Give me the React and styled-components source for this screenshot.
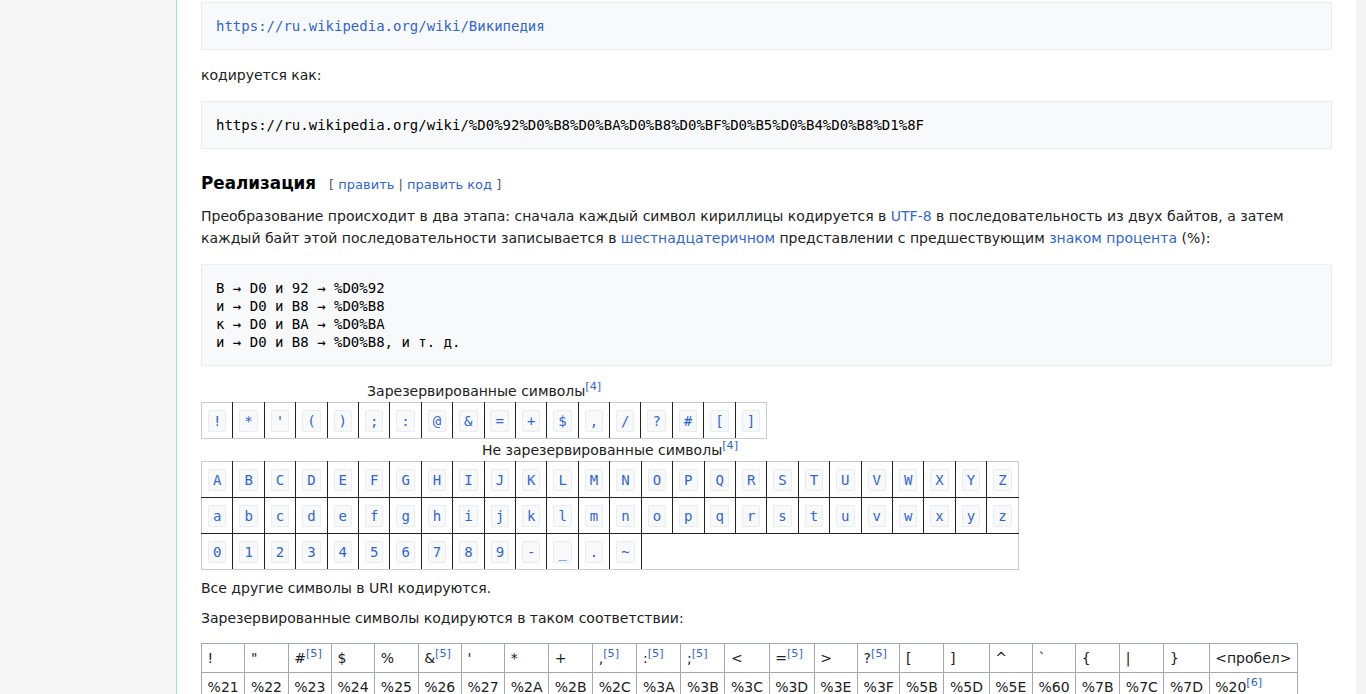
import styled, { createGlobalStyle } from 'styled-components';

const GlobalStyle = createGlobalStyle`
  body {
    margin: 0;
    background: #ffffff;
    color: #202122;
    font-family: "DejaVu Sans", sans-serif;
    font-size: 14px;
  }
`;

const reserved = ['!', '*', "'", '(', ')', ';', ':', '@', '&', '=', '+', '$', ',', '/', '?', '#', '[', ']'];
const upper = 'ABCDEFGHIJKLMNOPQRSTUVWXYZ'.split('');
const lower = 'abcdefghijklmnopqrstuvwxyz'.split('');
const digits = ['0', '1', '2', '3', '4', '5', '6', '7', '8', '9', '-', '_', '.', '~'];

const encoding = [
  ['!', '%21'], ['"', '%22'], ['#', '%23', 5], ['$', '%24'], ['%', '%25'],
  ['&', '%26', 5], ["'", '%27'], ['*', '%2A'], ['+', '%2B'], [',', '%2C', 5],
  [':', '%3A', 5], [';', '%3B', 5], ['<', '%3C'], ['=', '%3D', 5], ['>', '%3E'],
  ['?', '%3F', 5], ['[', '%5B'], [']', '%5D'], ['^', '%5E'], ['`', '%60'],
  ['{', '%7B'], ['|', '%7C'], ['}', '%7D'], ['<пробел>', '%20'],
];

export default function App() {
  return (
    <>
      <GlobalStyle />
      <Page>
        <Sidebar />
        <Main>
          <Pre><Link>https://ru.wikipedia.org/wiki/Википедия</Link></Pre>
          <P>кодируется как:</P>
          <Pre>https://ru.wikipedia.org/wiki/%D0%92%D0%B8%D0%BA%D0%B8%D0%BF%D0%B5%D0%B4%D0%B8%D1%8F</Pre>

          <Heading>
            Реализация
            <EditSection>
              <span className="br">[ </span><Link>править</Link>
              <span className="sep"> | </span><Link>править код</Link>
              <span className="br"> ]</span>
            </EditSection>
          </Heading>
          <P>
            Преобразование происходит в два этапа: сначала каждый символ кириллицы кодируется в <Link>UTF-8</Link> в последовательность из двух байтов, а затем каждый байт этой последовательности записывается в <Link>шестнадцатеричном</Link> представлении с предшествующим <Link>знаком процента</Link> (%):
          </P>
          <Pre>{`В → D0 и 92 → %D0%92
и → D0 и B8 → %D0%B8
к → D0 и BA → %D0%BA
и → D0 и B8 → %D0%B8, и т. д.`}</Pre>

          <CharTable $cols={18} $first>
            <caption>Зарезервированные символы<Sup>[4]</Sup></caption>
            <tbody>
              <tr>{reserved.map((c) => <CharCell key={c}><Chip>{c}</Chip></CharCell>)}</tr>
            </tbody>
          </CharTable>
          <CharTable $cols={26}>
            <caption>Не зарезервированные символы<Sup>[4]</Sup></caption>
            <tbody>
              <tr>{upper.map((c) => <CharCell key={c}><Chip>{c}</Chip></CharCell>)}</tr>
              <tr>{lower.map((c) => <CharCell key={c}><Chip>{c}</Chip></CharCell>)}</tr>
              <tr>
                {digits.map((c) => <CharCell key={c}><Chip>{c}</Chip></CharCell>)}
                <CharCell colSpan={12} />
              </tr>
            </tbody>
          </CharTable>

          <P>Все другие символы в URI кодируются.</P>
          <P>Зарезервированные символы кодируются в таком соответствии:</P>

          <WikiTable>
            <tbody>
              <tr>
                {encoding.map(([ch, , note]) => (
                  <td key={ch}>{ch}{note && <Sup>[{note}]</Sup>}</td>
                ))}
              </tr>
              <tr>
                {encoding.map(([ch, code]) => (
                  <td key={ch}>{code}{ch === '<пробел>' && <Sup>[6]</Sup>}</td>
                ))}
              </tr>
            </tbody>
          </WikiTable>
        </Main>
        <RightGutter />
      </Page>
    </>
  );
}

const Page = styled.div`
  display: flex;
  min-height: 694px;
  overflow: hidden;
`;

const Sidebar = styled.div`
  width: 176px;
  flex-shrink: 0;
  background: #f6f6f6;
  border-right: 1px solid #a7d7f9;
`;

const Main = styled.div`
  flex: 1;
  min-width: 0;
  padding: 2px 24px 0 24px;
  line-height: 1.6;
`;

const RightGutter = styled.div`
  width: 10px;
  flex-shrink: 0;
  background: #f4f4f4;
`;

const Link = styled.a`
  color: #3366cc;
  text-decoration: none;
  cursor: pointer;
`;

const Pre = styled.pre`
  margin: 14px 0;
  padding: 14px;
  background: #f8f9fa;
  border: 1px solid #eaecf0;
  font-family: "DejaVu Sans Mono", monospace;
  font-size: 14px;
  line-height: 1.3;
  color: #000;
  white-space: pre-wrap;
  &:first-child {
    margin-top: 0;
  }
`;

const P = styled.p`
  margin: 7px 0;
  line-height: 22.4px;
`;

const Heading = styled.h3`
  margin: 21px 0 7px;
  font-size: 16.8px;
  font-weight: bold;
  line-height: 27px;
  color: #000;
`;

const EditSection = styled.span`
  margin-left: 13px;
  font-size: 13px;
  font-weight: normal;
  .br, .sep {
    color: #54595d;
  }
`;

const Sup = styled.sup`
  font-size: 0.8em;
  line-height: 1;
  vertical-align: super;
  color: #3366cc;
`;

const CharTable = styled.table`
  border-collapse: collapse;
  table-layout: fixed;
  width: ${(p) => p.$cols * 31.46}px;
  margin: ${(p) => (p.$first ? '14px' : '0')} 0 0;
  caption {
    text-align: center;
    line-height: 22px;
    color: #202122;
  }
  td {
    border: 1px solid #202122;
  }
  tr:first-child td { border-top-color: #c8ccd1; }
  tr:last-child td { border-bottom-color: #c8ccd1; }
  td:first-child { border-left-color: #c8ccd1; }
  td:last-child { border-right-color: #c8ccd1; }
`;

const CharCell = styled.td`
  height: 35px;
  padding: 0;
  text-align: center;
  vertical-align: middle;
`;

const Chip = styled.code`
  display: inline-block;
  padding: 1px 4px;
  border: 1px solid #eaecf0;
  border-radius: 2px;
  background: #f8f9fa;
  color: #3366cc;
  font-family: "DejaVu Sans Mono", monospace;
  font-size: 14px;
  line-height: 18px;
`;

const WikiTable = styled.table`
  border-collapse: collapse;
  margin: 14px 0;
  background: #fff;
  color: #202122;
  td {
    border: 1px solid #a2a9b1;
    padding: 2.8px 5.6px;
    line-height: 22.4px;
    white-space: nowrap;
    text-align: left;
  }
`;
